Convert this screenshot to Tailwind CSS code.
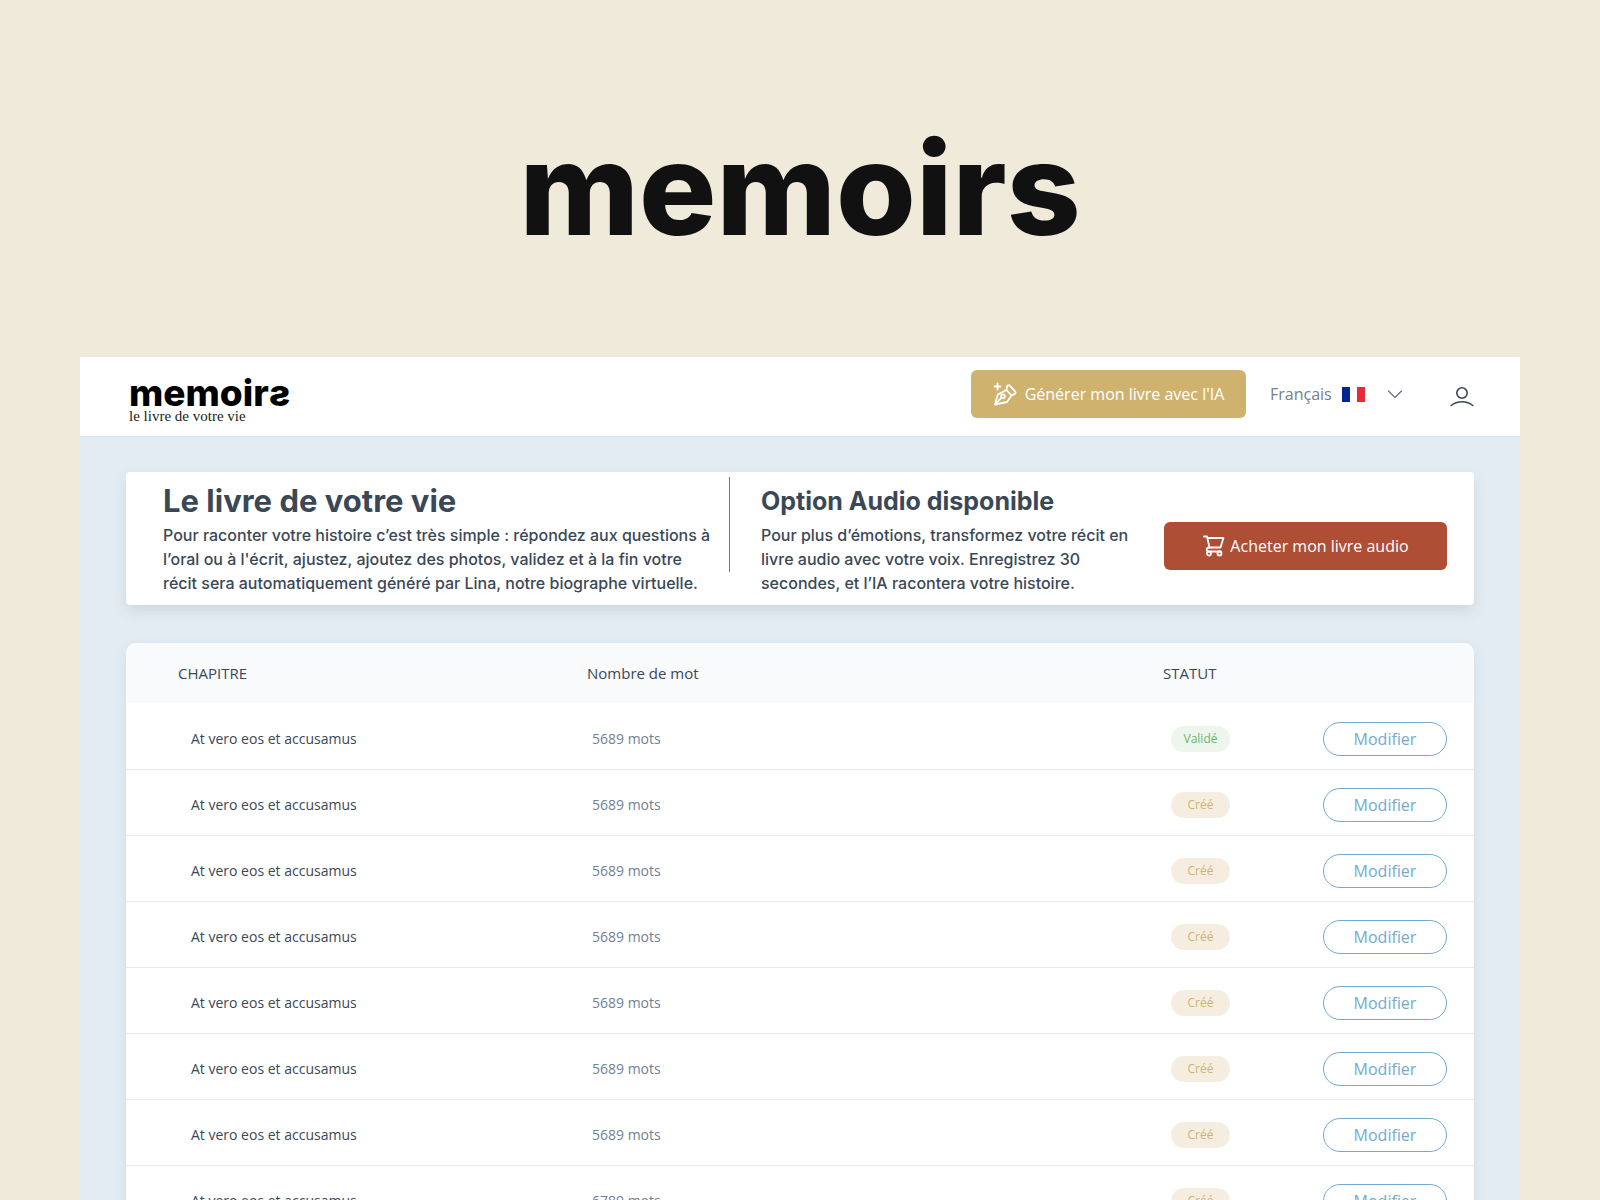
<!DOCTYPE html>
<html lang="fr">
<head>
  <meta charset="UTF-8"/><meta name="viewport" content="width=device-width, initial-scale=1.0"/>
  <title>memoirs</title>
  <!-- Tailwind -->
  <script src="https://cdn.jsdelivr.net/npm/@tailwindcss/browser@4"></script>
</head>
<body class="bg-[#f0eadb] h-screen overflow-hidden antialiased font-['Open_Sans',sans-serif] text-[#3a4856]">
  <!-- Titre -->
  <h1 class="h-[357px] pt-[98px] text-center font-['Inter',sans-serif] font-extrabold text-[129px] leading-[180px] text-[#111]">memoirs</h1>

  <div class="mx-20 bg-[#e4ecf3]">
    <!-- Barre du haut -->
    <header class="h-20 pl-[49px] pr-[46px] bg-white border-b border-[#dce2e6] flex items-center">
      <a href="#" class="block pt-2 text-black">
        <span class="block font-['Inter',sans-serif] font-extrabold text-[37px] leading-[30px]">memoir<span class="inline-block -scale-x-100">s</span></span>
        <span class="block font-['Liberation_Serif',serif] text-[15px] leading-4 text-[#222]">le livre de votre vie</span>
      </a>

      <button type="button" class="ml-auto h-12 w-[275px] -mt-[5px] rounded-md bg-[#d0b26f] text-white text-base flex items-center justify-center gap-2">
        <svg class="size-6" viewBox="0 0 24 24" fill="none" stroke="currentColor" stroke-width="1.8" stroke-linecap="round" stroke-linejoin="round">
          <path d="M4.500 1.500v6M1.500 4.500h6"/>
          <path d="M2 22.500L4.800 12.500 13.500 8l5 5.500-4.500 6.500L2 22.500z"/>
          <path d="M2.500 22l6-6.300"/>
          <circle cx="10" cy="14.300" r="1.900"/>
          <path d="M13.500 8l.4-3.200a1.700 1.700 0 0 1 2.900-1l5.300 5.600a1.600 1.600 0 0 1-.8 2.700L18.500 13.500"/>
        </svg>
        Générer mon livre avec l'IA
      </button>

      <button type="button" class="ml-6 -mt-[5px] flex items-center text-base text-[#718096]">
        <span class="w-18 text-left">Français</span>
        <svg class="w-[23px] h-[15px]" viewBox="0 0 23 15">
          <rect width="8" height="15" fill="#002395"/>
          <rect x="8" width="7" height="15" fill="#fff"/>
          <rect x="15" width="8" height="15" fill="#ed2939"/>
        </svg>
        <svg class="ml-[22px] w-4 h-4" viewBox="0 0 16 16" fill="none" stroke="#5f6f80" stroke-width="1.200" stroke-linecap="round" stroke-linejoin="round"><path d="M1.500 5L8 11.500l6.500-6.500"/></svg>
      </button>

      <button type="button" aria-label="Mon compte" class="ml-[47px]">
        <svg class="size-6" viewBox="0 0 24 24" fill="none" stroke="#3a4856" stroke-width="1.600" stroke-linecap="round">
          <circle cx="12" cy="8" r="5.200"/>
          <path d="M1.200 20.500C7 15.500 17 15.500 22.800 20.500"/>
        </svg>
      </button>
    </header>

    <main class="px-[46px] pt-[35px] pb-10">
      <!-- Présentation -->
      <section class="flex h-[133px] pl-[37px] pr-[27px] bg-white rounded shadow-[0_6px_14px_rgba(45,75,85,0.12)] font-['Inter',sans-serif]">
        <div class="w-[566px] pt-[7px]">
          <h2 class="text-[31px] leading-11 font-bold">Le livre de votre vie</h2>
          <p class="w-[555px] text-base font-medium">Pour raconter votre histoire c’est très simple : répondez aux questions à l’oral ou à l'écrit, ajustez, ajoutez des photos, validez et à la fin votre récit sera automatiquement généré par Lina, notre biographe virtuelle.</p>
        </div>
        <div class="mt-[5px] h-[95px] w-px bg-[#c2553d]"></div>
        <div class="pl-[31px] pt-[7px]">
          <h2 class="text-[25px] leading-11 font-bold">Option Audio disponible</h2>
          <p class="w-[375px] text-base font-medium">Pour plus d’émotions, transformez votre récit en livre audio avec votre voix. Enregistrez 30 secondes, et l’IA racontera votre histoire.</p>
        </div>
        <button type="button" class="ml-auto mt-[50px] h-12 w-[283px] rounded-md bg-[#ae4e35] text-white text-base font-medium font-['Open_Sans',sans-serif] flex items-center justify-center gap-1">
          <svg class="size-6" viewBox="0 0 24 24" fill="none" stroke="currentColor" stroke-width="1.800" stroke-linecap="round" stroke-linejoin="round">
            <path d="M2 2.500h3l2.500 11h11L21.500 4H5.500"/>
            <path d="M7.500 13.500c-2 0-2.800 1-2.800 2.200S5.500 17.500 7 17.500h12"/>
            <circle cx="7" cy="19.500" r="2"/>
            <circle cx="17.500" cy="19.500" r="2"/>
          </svg>
          Acheter mon livre audio
        </button>
      </section>

      <!-- Chapitres -->
      <div class="mt-[38px] rounded-[10px] overflow-hidden bg-white shadow-[0_4px_12px_rgba(45,85,85,0.1)]">
        <table class="w-full table-fixed text-left">
          <thead class="bg-[#f8fafc] text-[15px]">
            <tr class="h-15">
              <th class="w-[461px] pl-13 font-normal">CHAPITRE</th>
              <th class="font-normal">Nombre de mot</th>
              <th class="w-40 font-normal">STATUT</th>
              <th class="w-[151px]"></th>
            </tr>
          </thead>
          <tbody id="chapitres" class="text-sm"></tbody>
        </table>
      </div>
    </main>
  </div>

  <script>
    const chapitres = [
      { mots: 5689, valide: true },
      { mots: 5689 },
      { mots: 5689 },
      { mots: 5689 },
      { mots: 5689 },
      { mots: 5689 },
      { mots: 5689 },
      { mots: 6789 },
    ];

    document.getElementById("chapitres").innerHTML = chapitres.map(c => `
      <tr class="h-[66px] border-b border-[#e8ebed]">
        <td class="pl-[65px] pt-1.5">At vero eos et accusamus</td>
        <td class="pl-[5px] pt-1.5 text-[#718096]">${c.mots} mots</td>
        <td class="pl-2 pt-1.5">
          <span class="flex items-center justify-center w-[59px] h-[26px] rounded-full text-xs ${c.valide ? "bg-[#edf5ed] text-[#6cb56c]" : "bg-[#f5eee0] text-[#d0b26f]"}">${c.valide ? "Validé" : "Créé"}</span>
        </td>
        <td class="pr-[27px] pt-1.5">
          <button type="button" class="block w-full h-[34px] rounded-full border border-[#72abcf] text-base text-[#72abcf]">Modifier</button>
        </td>
      </tr>`).join("");
  </script>
</body>
</html>
